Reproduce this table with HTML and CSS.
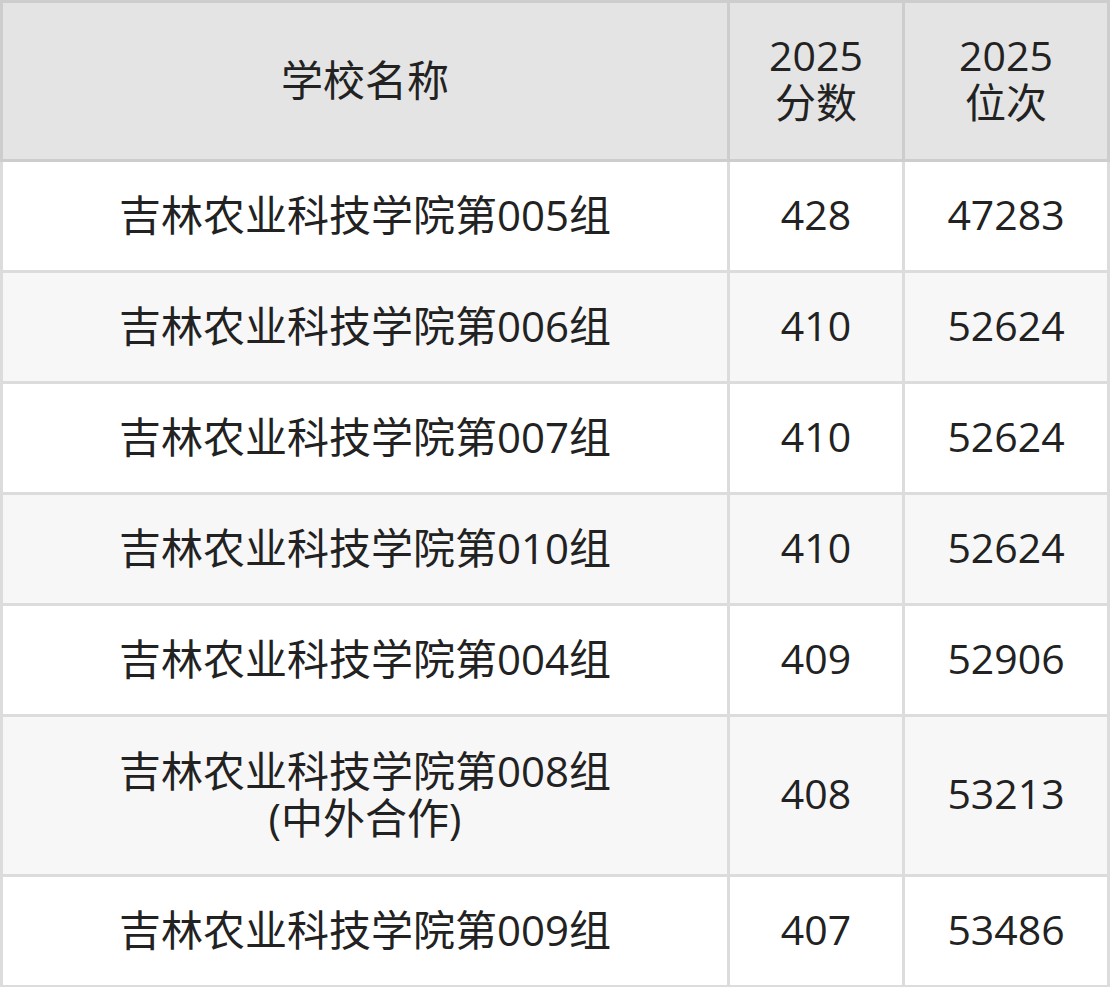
FILE: index.html
```html
<!DOCTYPE html>
<html lang="zh-CN">
<head>
<meta charset="utf-8">
<title>吉林农业科技学院</title>
<link rel="stylesheet" href="styles.css">
</head>
<body>
<div class="table">
  <div class="row head">
    <div class="cell name">学校名称</div>
    <div class="cell">2025<br>分数</div>
    <div class="cell">2025<br>位次</div>
  </div>
  <div class="row">
    <div class="cell name">吉林农业科技学院第005组</div>
    <div class="cell">428</div>
    <div class="cell">47283</div>
  </div>
  <div class="row alt">
    <div class="cell name">吉林农业科技学院第006组</div>
    <div class="cell">410</div>
    <div class="cell">52624</div>
  </div>
  <div class="row">
    <div class="cell name">吉林农业科技学院第007组</div>
    <div class="cell">410</div>
    <div class="cell">52624</div>
  </div>
  <div class="row alt">
    <div class="cell name">吉林农业科技学院第010组</div>
    <div class="cell">410</div>
    <div class="cell">52624</div>
  </div>
  <div class="row">
    <div class="cell name">吉林农业科技学院第004组</div>
    <div class="cell">409</div>
    <div class="cell">52906</div>
  </div>
  <div class="row alt tall">
    <div class="cell name">吉林农业科技学院第008组<br>(中外合作)</div>
    <div class="cell">408</div>
    <div class="cell">53213</div>
  </div>
  <div class="row">
    <div class="cell name">吉林农业科技学院第009组</div>
    <div class="cell">407</div>
    <div class="cell">53486</div>
  </div>
</div>
</body>
</html>
```
FILE: styles.css
```css
html, body {
  margin: 0;
  padding: 0;
  background: #ffffff;
}

.table {
  width: 1110px;
  display: flex;
  flex-direction: column;
  font-family: "Open Sans", "Noto Sans CJK SC", sans-serif;
  font-size: 41px;
  line-height: 47px;
  color: #222222;
}

.row {
  display: grid;
  grid-template-columns: 724px 172px 202px;
  column-gap: 3px;
  padding: 0 3px 3px 3px;
  background: #dcdcdc;
}

.head {
  padding: 3px;
  background: #cdcdcd;
}

.cell {
  display: flex;
  align-items: center;
  justify-content: center;
  text-align: center;
  box-sizing: border-box;
  height: 108px;
  padding-bottom: 4px;
  background: #ffffff;
}

.cell.name {
  font-size: 42px;
}

.head .cell {
  height: 156px;
  background: #e4e4e4;
}

.alt .cell {
  background: #f7f7f7;
}

.tall .cell {
  height: 157px;
}
```
